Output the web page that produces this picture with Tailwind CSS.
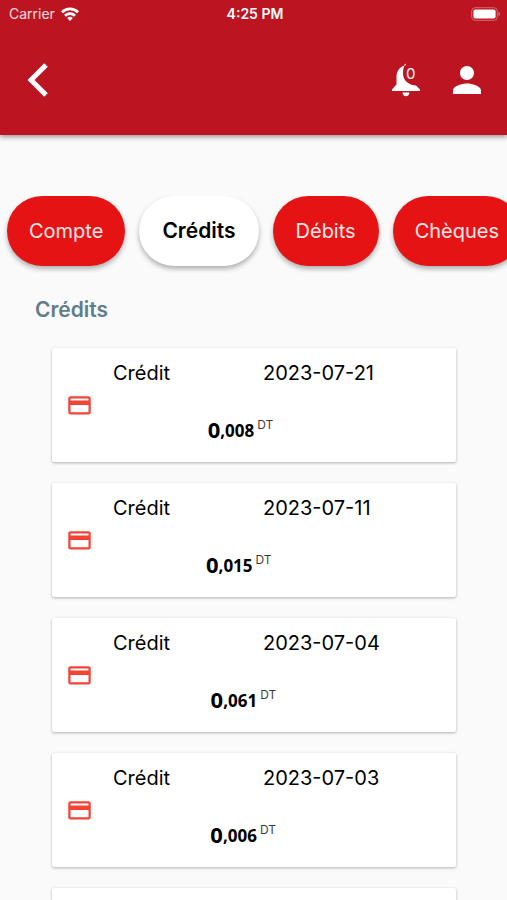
<!DOCTYPE html>
<html lang="fr">

<head>
    <meta charset="UTF-8" />
    <meta name="viewport" content="width=device-width, initial-scale=1.0" />
    <title>Crédits</title>
    <script src="https://cdn.jsdelivr.net/npm/@tailwindcss/browser@4"></script>
</head>

<body class="min-h-screen flex flex-col bg-[#fafafa] font-['Inter',sans-serif] text-black">
    <header class="shrink-0 bg-[#bc1521] text-white shadow-[0_2px_5px_rgba(0,0,0,0.4)]">
        <!-- Status bar -->
        <div class="grid grid-cols-3 items-center h-7 pl-[9px] pr-1.5 text-sm">
            <div class="flex items-center gap-1.5 text-white/85">
                <span>Carrier</span>
                <svg class="w-[18px] h-[14px]" viewBox="0 0 18 14" fill="none" stroke="white" stroke-width="2.8">
                    <path d="M1 5.2a11.5 11.5 0 0 1 16 0" />
                    <path d="M4 8.7a7.2 7.2 0 0 1 10 0" />
                    <path d="M9 14 6.2 11a4 4 0 0 1 5.600 0z" fill="white" stroke="none" />
                </svg>
            </div>
            <span class="text-center font-semibold">4:25 PM</span>
            <svg class="justify-self-end w-[30px] h-[14px]" viewBox="0 0 30 14" fill="none">
                <rect x="0.7" y="0.7" width="25.6" height="12.6" rx="3.5" stroke="white" stroke-opacity="0.35" />
                <rect x="2.4" y="2.4" width="22.2" height="9.2" rx="2" fill="white" />
                <path d="M27.6 4.8v4.400c1.600-.6 1.600-3.800 0-4.400z" fill="white" fill-opacity="0.5" />
            </svg>
        </div>

        <!-- Nav bar -->
        <nav class="flex items-center h-[107px] pl-6 pr-5 pb-1">
            <button aria-label="Retour" class="mr-auto">
                <svg class="w-7 h-9" viewBox="0 0 28 36" fill="none" stroke="white" stroke-width="5">
                    <path d="M22 3 7 18 22 33" />
                </svg>
            </button>
            <button aria-label="Notifications" class="relative mr-[31px]">
                <svg class="w-8 h-9" viewBox="0 0 32 36" fill="white">
                    <path d="M14.500 3.500C9 5.500 6.500 9.500 6.500 15v7.500L2 27.500V29h28v-1.500L26 23.500C18.500 23 13 18.500 13 11.500c0-3.500.5-6 1.500-8z" />
                    <path d="M12.500 30.500h7c-.3 2.500-1.600 3.800-3.500 3.800s-3.200-1.300-3.500-3.800z" />
                    <path d="M14.500 2.500 16 1.500v1.500l-1.500 1z" />
                </svg>
                <span class="absolute left-4 top-0.5 text-[15px] leading-5">0</span>
            </button>
            <button aria-label="Profil" class="mr-1.5">
                <svg class="w-7 h-7" viewBox="4 4 16 16" fill="white">
                    <path d="M12 12c2.210 0 4-1.790 4-4s-1.790-4-4-4-4 1.790-4 4 1.790 4 4 4zm0 2c-2.670 0-8 1.340-8 4v2h16v-2c0-2.660-5.330-4-8-4z" />
                </svg>
            </button>
        </nav>
    </header>

    <!-- Categories -->
    <div class="shrink-0 mt-[61px] pl-[7px] pb-[7px] flex gap-3.5 overflow-hidden text-xl">
        <button class="shrink-0 h-[70px] px-[22px] rounded-full bg-[#e51313] text-white/90 shadow-[0_3px_5px_rgba(0,0,0,0.3)]">Compte</button>
        <button class="shrink-0 h-[70px] px-[23px] rounded-full bg-white text-[21px] font-semibold shadow-[0_3px_5px_rgba(0,0,0,0.3)]">Crédits</button>
        <button class="shrink-0 h-[70px] px-[23px] rounded-full bg-[#e51313] text-white/90 shadow-[0_3px_5px_rgba(0,0,0,0.3)]">Débits</button>
        <button class="shrink-0 h-[70px] px-[22px] rounded-full bg-[#e51313] text-white/90 shadow-[0_3px_5px_rgba(0,0,0,0.3)]">Chèques</button>
    </div>

    <main class="pb-6">
        <h1 class="mt-[23px] pl-[35px] text-[21px] leading-7 font-semibold text-[#607d8b]">Crédits</h1>

        <ul class="mt-6 ml-[52px] mr-[51px] flex flex-col gap-[21px]">
            <li class="flex items-center h-[114px] pl-3.5 rounded-xs bg-white shadow-[0_1px_3px_rgba(0,0,0,0.3)]">
                <svg class="w-[27px] h-[27px] mr-5 shrink-0" viewBox="0 0 24 24" fill="#f44336">
                    <path d="M20 3.700H4c-1.110 0-1.990.89-1.990 2L2 18c0 1.110.89 2 2 2h16c1.110 0 2-.89 2-2V5.700c0-1.110-.89-2-2-2zm0 14.300H4v-6.500h16V18zm0-10.500H4V5.800h16v1.700z" />
                </svg>
                <div class="h-full pt-[11px] flex flex-col items-center">
                    <div class="flex text-xl leading-7"><span class="w-[150px]">Crédit</span><time>2023-07-21</time></div>
                    <p class="mt-7 pr-1.5 flex items-start font-['Noto_Sans',sans-serif] font-bold"><span class="text-[22px] leading-7">0</span><span class="text-[17px] leading-8">,008</span><span class="ml-[3px] text-xs leading-5 font-normal font-['Inter',sans-serif] text-black/80">DT</span></p>
                </div>
            </li>
            <li class="flex items-center h-[114px] pl-3.5 rounded-xs bg-white shadow-[0_1px_3px_rgba(0,0,0,0.3)]">
                <svg class="w-[27px] h-[27px] mr-5 shrink-0" viewBox="0 0 24 24" fill="#f44336">
                    <path d="M20 3.700H4c-1.110 0-1.990.89-1.990 2L2 18c0 1.110.89 2 2 2h16c1.110 0 2-.89 2-2V5.700c0-1.110-.89-2-2-2zm0 14.300H4v-6.500h16V18zm0-10.500H4V5.800h16v1.700z" />
                </svg>
                <div class="h-full pt-[11px] flex flex-col items-center">
                    <div class="flex text-xl leading-7"><span class="w-[150px]">Crédit</span><time>2023-07-11</time></div>
                    <p class="mt-7 pr-1.5 flex items-start font-['Noto_Sans',sans-serif] font-bold"><span class="text-[22px] leading-7">0</span><span class="text-[17px] leading-8">,015</span><span class="ml-[3px] text-xs leading-5 font-normal font-['Inter',sans-serif] text-black/80">DT</span></p>
                </div>
            </li>
            <li class="flex items-center h-[114px] pl-3.5 rounded-xs bg-white shadow-[0_1px_3px_rgba(0,0,0,0.3)]">
                <svg class="w-[27px] h-[27px] mr-5 shrink-0" viewBox="0 0 24 24" fill="#f44336">
                    <path d="M20 3.700H4c-1.110 0-1.990.89-1.990 2L2 18c0 1.110.89 2 2 2h16c1.110 0 2-.89 2-2V5.700c0-1.110-.89-2-2-2zm0 14.300H4v-6.500h16V18zm0-10.500H4V5.800h16v1.700z" />
                </svg>
                <div class="h-full pt-[11px] flex flex-col items-center">
                    <div class="flex text-xl leading-7"><span class="w-[150px]">Crédit</span><time>2023-07-04</time></div>
                    <p class="mt-7 pr-1.5 flex items-start font-['Noto_Sans',sans-serif] font-bold"><span class="text-[22px] leading-7">0</span><span class="text-[17px] leading-8">,061</span><span class="ml-[3px] text-xs leading-5 font-normal font-['Inter',sans-serif] text-black/80">DT</span></p>
                </div>
            </li>
            <li class="flex items-center h-[114px] pl-3.5 rounded-xs bg-white shadow-[0_1px_3px_rgba(0,0,0,0.3)]">
                <svg class="w-[27px] h-[27px] mr-5 shrink-0" viewBox="0 0 24 24" fill="#f44336">
                    <path d="M20 3.700H4c-1.110 0-1.990.89-1.990 2L2 18c0 1.110.89 2 2 2h16c1.110 0 2-.89 2-2V5.700c0-1.110-.89-2-2-2zm0 14.300H4v-6.500h16V18zm0-10.500H4V5.800h16v1.700z" />
                </svg>
                <div class="h-full pt-[11px] flex flex-col items-center">
                    <div class="flex text-xl leading-7"><span class="w-[150px]">Crédit</span><time>2023-07-03</time></div>
                    <p class="mt-7 pr-1.5 flex items-start font-['Noto_Sans',sans-serif] font-bold"><span class="text-[22px] leading-7">0</span><span class="text-[17px] leading-8">,006</span><span class="ml-[3px] text-xs leading-5 font-normal font-['Inter',sans-serif] text-black/80">DT</span></p>
                </div>
            </li>
            <li class="h-[114px] rounded-xs bg-white shadow-[0_1px_3px_rgba(0,0,0,0.3)]"></li>
        </ul>
    </main>
</body>

</html>
